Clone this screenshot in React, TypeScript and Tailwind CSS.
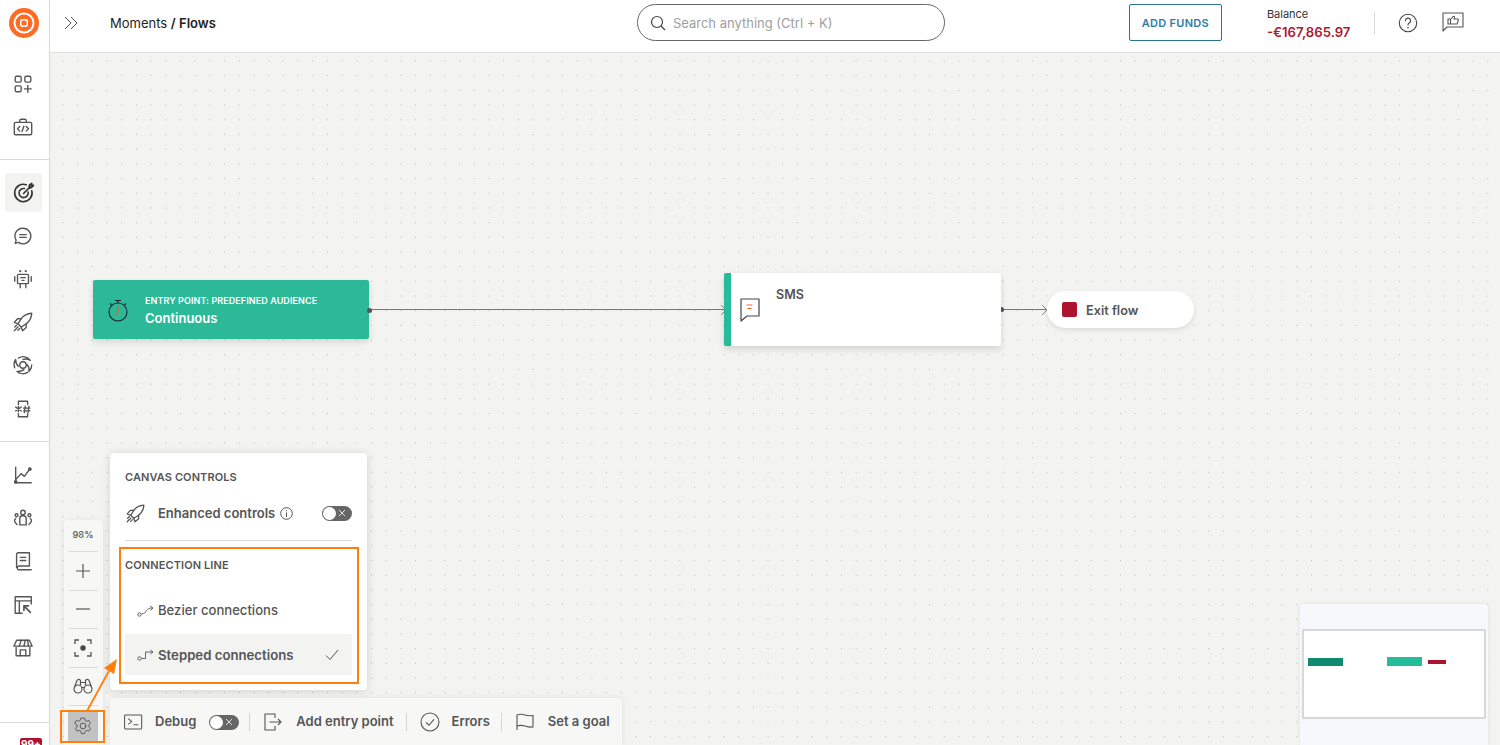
import { ReactNode } from "react";

const Ico = ({ children, size = 22, sw = 1.5, color = "#555" }: { children: ReactNode; size?: number; sw?: number; color?: string }) => (
  <svg width={size} height={size} viewBox="0 0 24 24" fill="none" stroke={color} strokeWidth={sw} strokeLinecap="round" strokeLinejoin="round">
    {children}
  </svg>
);

const Rocket = ({ size = 22 }: { size?: number }) => (
  <Ico size={size}>
    <path d="M21.5 2.500c-5.500.3-9 2.500-11.500 6l-3.500 5.500 3.500 3.500 5.500-3.500c3.500-2.500 5.700-6 6-11.500Z" />
    <path d="M10 8.500H6L2.500 12.500l4 1.500" />
    <path d="M15.500 14v4L11.500 21.500 10 17.500" />
    <path d="M6.500 17.500 2.500 21.500" />
    <path d="M5 15.500 3 17.500" />
    <path d="M8.500 19 6.500 21" />
  </Ico>
);

const sideTop = [
  <Ico key="a">
    <rect x="3.500" y="3.500" width="6.500" height="6.500" rx="1.500" />
    <rect x="14" y="3.500" width="6.500" height="6.500" rx="1.500" />
    <rect x="3.500" y="14" width="6.500" height="6.500" rx="1.500" />
    <path d="M17.250 13.500v7.500M13.500 17.250H21" />
  </Ico>,
  <Ico key="b">
    <rect x="2.500" y="7" width="19" height="13.500" rx="1.500" />
    <path d="M8.500 7V5a1.500 1.500 0 0 1 1.500-1.500h4A1.500 1.500 0 0 1 15.500 5v2" />
    <path d="m8.500 11.500-2.500 2.500 2.500 2.500M15.500 11.500l2.500 2.500-2.500 2.500M13 11l-2 6" />
  </Ico>,
];

const sideMid = [
  <Ico key="c" color="#333" sw={1.7}>
    <path d="M20.500 9.500A9.500 9.500 0 1 1 14.500 3" />
    <path d="M16.500 11a5 5 0 1 1-4-3.900" />
    <path d="M11.500 12.500 20 4" />
    <path d="M17.500 6.500 17.800 3.500 20.500 1.500 20.500 3.500 22.500 3.500 20 6.300Z" />
  </Ico>,
  <Ico key="d">
    <path d="M12 3.500a8.500 8.500 0 1 1-4.800 15.500l-3.700 1 1-3.500A8.500 8.500 0 0 1 12 3.500Z" />
    <path d="M8.500 10.500h7M8.500 13.500h7" />
  </Ico>,
  <Ico key="e">
    <rect x="6" y="7" width="12" height="10" rx="1" />
    <path d="M3 9.500v5M21 9.500v5M9 17v4.500M15 17v4.500M9.500 10.500h5M11 13.500h2" />
    <path d="M9 3.500h.01M15 3.500h.01" strokeWidth="2.400" />
  </Ico>,
  <Rocket key="f" />,
  <Ico key="g">
    <circle cx="12" cy="12" r="3.500" />
    <path d="M7 4.500A9.500 9.500 0 0 1 20 7c-2.500-1.500-6-1.800-8-1M21.500 12a9.500 9.500 0 0 1-3 7c.5-3-.3-5.500-2-7.500M17 20a9.500 9.500 0 0 1-11.500-1c3 .3 5.500-.5 7.500-2M3 15a9.500 9.500 0 0 1 1-9c0 3 .8 5.500 3 7.500" />
  </Ico>,
  <Ico key="h">
    <path d="M7 7V3.500h10V7M7 17v3.500h10V17" />
    <path d="M7 9v6M4 10l6 4M10 10l-6 4" />
    <path d="M14.500 9l-1 7M18.500 9l-1 7M12.500 11h7M12.500 14h7" />
  </Ico>,
];

const sideBottom = [
  <Ico key="i">
    <path d="M4 3.500V20.500H21" />
    <path d="M4 17l6-6.500 3.500 3L19 6" />
    <circle cx="19.500" cy="5.500" r="1.300" fill="#555" />
    <circle cx="4" cy="19.500" r="1.300" fill="#555" />
  </Ico>,
  <Ico key="j">
    <circle cx="12" cy="6" r="2.500" />
    <path d="M8.500 19.500v-7a3 3 0 0 1 3-3h1a3 3 0 0 1 3 3v7Z" />
    <circle cx="5" cy="9" r="1.600" />
    <circle cx="19" cy="9" r="1.600" />
    <path d="M5.500 19 3.500 17c-1-1.500-1-3.500.5-4.500M18.500 19l2-2c1-1.500 1-3.500-.5-4.500" />
  </Ico>,
  <Ico key="k">
    <path d="M5 19V5a2 2 0 0 1 2-2h12v14.500H7A2.200 2.200 0 0 0 7 21.500h14" />
    <path d="M9 8h6M9 11.500h6" />
  </Ico>,
  <Ico key="l">
    <path d="M11 21H3.500V3H21v8" />
    <path d="M3.500 7.500H21M8 7.500V21" />
    <path d="m13 13 7 7M13 13v5M13 13h5" strokeWidth="1.800" />
  </Ico>,
  <Ico key="m">
    <path d="M4.500 11.500V20.500h15V11.500" />
    <path d="M5 3.500h14L22 10H2Z" />
    <path d="M8 10l2-6.500M13 10l1.500-6.500M18 10l-1-6.500" />
    <path d="M9 20.500V14h6v6.500" />
  </Ico>,
];

const ZoomCell = ({ children, h = "h-[38.5px]" }: { children: ReactNode; h?: string }) => (
  <div className={`${h} mx-[5px] flex items-center justify-center border-b border-[#dcdcdc] pr-px`}>{children}</div>
);

const Sep = () => <div className="h-[18px] w-px bg-[#d5d5d5]" />;

const Toggle = () => (
  <div className="flex h-[15px] w-[30px] items-center justify-between rounded-full bg-[#666] pl-px pr-[6px]">
    <div className="h-[13px] w-[13px] rounded-full bg-white" />
    <svg width="8" height="8" viewBox="0 0 8 8" stroke="#eee" strokeWidth="0.9"><path d="M1 1l6 6M7 1L1 7" /></svg>
  </div>
);

export default function App() {
  return (
    <div className="flex h-[745px] w-[1500px] overflow-hidden bg-white font-['Inter',sans-serif] text-[#444]">
      {/* left nav */}
      <div className="flex h-full w-[50px] shrink-0 flex-col border-r border-[#d9d9d9] bg-white">
        <div className="h-[160px] shrink-0 border-b border-[#d9d9d9]">
          <div className="flex h-[62.5px] items-start pl-[9px] pt-[8px]">
            <svg width="30" height="30" viewBox="0 0 30 30">
              <circle cx="15" cy="15" r="15" fill="#ff6b22" />
              <circle cx="15" cy="15" r="10.5" fill="#fff" />
              <circle cx="15" cy="15" r="8.5" fill="#ff6b22" />
              <rect x="11" y="11" width="8" height="8" rx="2.5" fill="#fff" />
              <rect x="12.5" y="12.5" width="5" height="5" rx="1.5" fill="#ff6b22" />
            </svg>
          </div>
          {sideTop.map((icon, i) => (
            <div key={i} className="flex h-[43px] items-center justify-center pr-[3px]">{icon}</div>
          ))}
        </div>
        <div className="h-[282px] shrink-0 border-b border-[#d9d9d9] pt-[11px]">
          {sideMid.map((icon, i) => (
            <div key={i} className="flex h-[43.2px] items-center justify-center pr-[3px]">
              <div className={i === 0 ? "ml-px flex h-[39px] w-[37px] items-center justify-center rounded-[3px] bg-[#f3f3f2]" : ""}>{icon}</div>
            </div>
          ))}
        </div>
        <div className="h-[281px] shrink-0 border-b border-[#d9d9d9] pt-[11px]">
          {sideBottom.map((icon, i) => (
            <div key={i} className="flex h-[43.3px] items-center justify-center pr-[3px]">{icon}</div>
          ))}
        </div>
        <div className="flex justify-end pr-[7px] pt-[15px]">
          <span className="h-[14px] w-[22px] rounded-[2px] bg-[#b3102e] text-center text-[10px] font-bold leading-[12px] text-white">99+</span>
        </div>
      </div>

      <div className="flex min-w-0 flex-1 flex-col">
        {/* top bar */}
        <div className="flex h-[53px] shrink-0 items-center border-b border-[#dedede] bg-white pb-[7px]">
          <div className="ml-[13px] w-[47px]">
            <svg width="16" height="16" viewBox="0 0 16 16" fill="none" stroke="#555" strokeWidth="1"><path d="M2 2l6 6-6 6M8 2l6 6-6 6" /></svg>
          </div>
          <div className="mt-[2px] text-[13px] text-[#222]">Moments <span className="font-semibold">/ Flows</span></div>
          <div className="ml-[421px] flex h-[37px] w-[308px] items-center rounded-full border border-[#666] pl-[12px]">
            <svg width="16" height="16" viewBox="0 0 16 16" fill="none" stroke="#444" strokeWidth="1.2"><circle cx="7" cy="7" r="5.5" /><path d="M11 11l4 4" /></svg>
            <span className="ml-[7px] mt-[2px] text-[13px] text-[#a0a0a0]">Search anything (Ctrl + K)</span>
          </div>
          <div className="ml-[184px] flex h-[37px] w-[93px] items-center justify-center rounded-[2px] border border-[#2a7396] pt-[2px] text-[11px] font-semibold tracking-[0.3px] text-[#2f7ea6]">ADD FUNDS</div>
          <div className="ml-[45px] mt-[2px] w-[107px]">
            <div className="text-[11px] leading-[14px] text-[#333]">Balance</div>
            <div className="mt-[3px] text-[13.2px] font-semibold leading-[17px] text-[#ae1a30]">-€167,865.97</div>
          </div>
          <div className="h-[22px] w-px bg-[#d9d9d9]" />
          <div className="ml-[22px]">
            <Ico size={22} color="#444" sw={1.2}>
              <circle cx="12" cy="12" r="9.5" />
              <path d="M9.200 9.500a2.800 2.800 0 1 1 4.200 2.400c-.9.600-1.400 1.100-1.400 2.100" />
              <path d="M12 17.200h.01" strokeWidth="1.8" />
            </Ico>
          </div>
          <div className="ml-[23px] -mt-[1px]">
            <svg width="22" height="20" viewBox="0 0 22 20" fill="none" stroke="#555" strokeWidth="1.1" strokeLinejoin="round">
              <path d="M1 1h20v14H5l-4 4Z" />
              <path d="M6 7h2.500v5H6ZM8.500 7.500l2.500-3c1-.6 1.800.2 1.500 1.200L12 7h3.500c.7 0 1 .6.800 1.200l-1 3.300c-.1.300-.4.500-.8.500H8.500" />
            </svg>
          </div>
        </div>

        {/* canvas */}
        <div className="relative flex-1 bg-[#f3f3f1] bg-[radial-gradient(circle,#b4b4b4_0.6px,transparent_0.9px)] bg-[size:14.7px_14.7px] bg-[position:5.7px_0.7px]">
          {/* entry node */}
          <div className="absolute left-[43px] top-[227px] flex h-[59px] w-[276px] items-center rounded-[2px] bg-[#2bb998] pl-[14px] shadow-[0_3px_6px_rgba(0,0,0,0.12)]">
            <svg width="22" height="24" viewBox="0 0 22 24" fill="none" stroke="#223" strokeWidth="1.1">
              <circle cx="11" cy="14" r="9" />
              <path d="M8 2.500h6M11 2.500V5M3 5.500 4.500 7M19 5.500 17.500 7" />
              <path d="M11 8v6l-3 3.500" stroke="#e0662a" strokeWidth="1.2" />
            </svg>
            <div className="ml-[16px] mt-[3px] text-white">
              <div className="text-[9px] font-semibold leading-[12px] tracking-[0.08px]">ENTRY POINT: PREDEFINED AUDIENCE</div>
              <div className="mt-[2px] text-[13px] font-semibold leading-[18px]">Continuous</div>
            </div>
          </div>

          {/* connectors */}
          <div className="absolute left-[319px] top-[256px] h-px w-[355px] bg-[#777]" />
          <div className="absolute left-[317px] top-[254.5px] h-[5px] w-[5px] rounded-full bg-[#555]" />
          <svg className="absolute left-[670px] top-[251px]" width="7" height="12" viewBox="0 0 7 12" fill="none" stroke="#888"><path d="M1 1l5 5-5 5" /></svg>
          <div className="absolute left-[951px] top-[256px] h-px w-[46px] bg-[#777]" />
          <div className="absolute left-[948.5px] top-[254px] h-[5px] w-[5px] rounded-full bg-[#555]" />
          <svg className="absolute left-[991px] top-[251px]" width="7" height="12" viewBox="0 0 7 12" fill="none" stroke="#888"><path d="M1 1l5 5-5 5" /></svg>

          {/* sms node */}
          <div className="absolute left-[674px] top-[220px] flex h-[73px] w-[277px] rounded-[2px] border-l-[7px] border-[#26bc9a] bg-white shadow-[0_3px_6px_rgba(0,0,0,0.14)]">
            <svg className="ml-[9px] mt-[25px]" width="20" height="24" viewBox="0 0 20 24" fill="none">
              <path d="M1 1h18v17H7l-6 5Z" stroke="#444" strokeWidth="1.2" strokeLinejoin="round" />
              <path d="M6.500 7h6M7.500 10.500h4" stroke="#f0642a" strokeWidth="1" />
            </svg>
            <div className="ml-[16px] mt-[13px] text-[12.5px] font-semibold text-[#555]">SMS</div>
          </div>

          {/* exit */}
          <div className="absolute left-[997px] top-[238px] flex h-[37px] w-[147px] items-center rounded-full bg-white pl-[15px] shadow-[0_2px_5px_rgba(0,0,0,0.1)]">
            <div className="h-[15px] w-[15px] rounded-[2px] bg-[#ae132d]" />
            <span className="ml-[9px] mt-[2px] text-[12.7px] font-semibold text-[#555]">Exit flow</span>
          </div>

          {/* settings popup */}
          <div className="absolute left-[60px] top-[400px] h-[237px] w-[257px] rounded-[4px] bg-white px-[15px] pt-[17px] shadow-[0_1px_8px_rgba(0,0,0,0.14)]">
            <div className="text-[11px] font-semibold leading-[14px] tracking-[0.1px] text-[#555]">CANVAS CONTROLS</div>
            <div className="mt-[18px] flex h-[22px] items-center">
              <Rocket size={21} />
              <span className="ml-[12px] mt-[2px] text-[13px] font-semibold text-[#555]">Enhanced controls</span>
              <svg className="ml-[5px]" width="13" height="13" viewBox="0 0 13 13" fill="none" stroke="#555"><circle cx="6.5" cy="6.5" r="5.8" /><path d="M6.500 5.500V10M6.500 3.200v1" /></svg>
              <div className="ml-auto"><Toggle /></div>
            </div>
            <div className="mt-[16px] h-px bg-[#d9d9d9]" />
          </div>

          {/* connection line box */}
          <div className="absolute left-[69px] top-[494px] h-[137px] w-[240px] border-2 border-[#ff7f0e] pl-[4px] pr-[5px] pt-[9px]">
            <div className="text-[11px] font-semibold leading-[14px] tracking-[0.1px] text-[#555]">CONNECTION LINE</div>
            <div className="mt-[18px] flex h-[41px] items-center pl-[12px]">
              <svg width="17" height="12" viewBox="0 0 17 12" fill="none" stroke="#555" strokeWidth="0.9"><circle cx="2.5" cy="9.5" r="1.7" /><path d="M4.500 9c3-.3 4-1.500 5-3.500 1-1.500 3-2.500 6-2.500M13 1l3 2-2.500 2.500" /></svg>
              <span className="ml-[4px] text-[13.1px] font-medium text-[#555]">Bezier connections</span>
            </div>
            <div className="mt-[3px] flex h-[41px] items-center rounded-[2px] bg-[#f3f3f2] pl-[12px] pr-[13px]">
              <svg width="17" height="12" viewBox="0 0 17 12" fill="none" stroke="#555" strokeWidth="0.9"><circle cx="2.5" cy="9.5" r="1.7" /><path d="M4.500 9.500H8.500V3H15.500M13.500 1l2.500 2-2.500 2" /></svg>
              <span className="ml-[4px] mt-[2px] text-[13.2px] font-semibold text-[#555]">Stepped connections</span>
              <svg className="ml-auto" width="14" height="12" viewBox="0 0 14 12" fill="none" stroke="#555"><path d="M1 6.500l4 4L13 1" /></svg>
            </div>
          </div>

          {/* zoom controls */}
          <div className="absolute left-[14px] top-[467px] h-[225px] w-[39px] rounded-t-[4px] bg-[#f7f7f6] shadow-[0_1px_6px_rgba(0,0,0,0.08)]">
            <ZoomCell h="h-[32px]"><span className="mb-[2px] text-[9.3px] font-medium text-[#555]">98%</span></ZoomCell>
            <ZoomCell><svg width="14" height="14" viewBox="0 0 14 14" stroke="#555" strokeWidth="1.2"><path d="M7 0v14M0 7h14" /></svg></ZoomCell>
            <ZoomCell><svg width="14" height="2" viewBox="0 0 14 2" stroke="#555" strokeWidth="1.2"><path d="M0 1h14" /></svg></ZoomCell>
            <ZoomCell>
              <svg width="18" height="18" viewBox="0 0 18 18" fill="none" stroke="#555" strokeWidth="1.3"><path d="M1 5V1h4M13 1h4v4M17 13v4h-4M5 17H1v-4" /><circle cx="9" cy="9" r="2.7" fill="#444" stroke="none" /></svg>
            </ZoomCell>
            <ZoomCell>
              <svg width="20" height="16" viewBox="0 0 20 16" fill="none" stroke="#555" strokeWidth="1.2"><circle cx="5" cy="11" r="4" /><circle cx="15" cy="11" r="4" /><path d="M1.500 9 4 2.500c.5-1.500 3-1.500 3.500 0V7M18.500 9 16 2.500c-.5-1.500-3-1.500-3.500 0V7M8.500 9.500h3M7.500 4.500h5" /></svg>
            </ZoomCell>
            <div className="mx-[4px] mt-[4.5px] flex h-[31px] w-[30px] items-center justify-center bg-[#c2c2c2]">
              <Ico size={20} sw={1.1} color="#555">
                <path d="M10 2.500h4l.6 2.800 1.800 1 2.700-.9 2 3.500-2.100 1.900v2l2.100 1.900-2 3.500-2.700-.9-1.800 1-.6 2.800h-4l-.6-2.800-1.800-1-2.700.9-2-3.500 2.100-1.900v-2L1.900 8.900l2-3.500 2.700.9 1.800-1Z" />
                <circle cx="12" cy="12" r="3.5" />
              </Ico>
            </div>
          </div>
          <div className="absolute left-[10px] top-[656.5px] h-[33px] w-[45px] border-2 border-[#ff7f0e]" />

          {/* arrow */}
          <svg className="absolute left-[34px] top-[603px]" width="36" height="58" viewBox="0 0 36 58" fill="none">
            <path d="M3 55 26 13" stroke="#ff7f0e" strokeWidth="1.8" />
            <path d="M33 3 20 12l10 6Z" fill="#ff7f0e" />
          </svg>

          {/* bottom toolbar */}
          <div className="absolute left-[60px] top-[645px] flex h-[47px] w-[512px] items-center rounded-t-[4px] bg-[#f7f7f6] pl-[14px] pt-[1px] text-[13px] font-semibold text-[#555] shadow-[0_0_6px_rgba(0,0,0,0.08)]">
            <svg width="19" height="16" viewBox="0 0 20 16" fill="none" stroke="#555" strokeWidth="1.1"><rect x="0.6" y="0.6" width="18" height="14.8" rx="1" /><path d="M4.500 4.500 8 7.500l-3.500 3M10 11h5" /></svg>
            <span className="ml-[12px]">Debug</span>
            <div className="ml-[13px] mr-[10px]"><Toggle /></div>
            <Sep />
            <svg className="ml-[14px]" width="18" height="18" viewBox="0 0 18 18" fill="none" stroke="#555" strokeWidth="1.1"><path d="M11 5V1H1v16h10v-4M5.500 9H17M14 6l3 3-3 3" /></svg>
            <span className="ml-[14px]">Add entry point</span>
            <div className="ml-[12px]"><Sep /></div>
            <svg className="ml-[13px]" width="20" height="20" viewBox="0 0 20 20" fill="none" stroke="#555" strokeWidth="1.1"><circle cx="10" cy="10" r="9" /><path d="M6 10.500l3 2.800 5-6" /></svg>
            <span className="ml-[12px]">Errors</span>
            <div className="ml-[11px]"><Sep /></div>
            <svg className="ml-[14px]" width="18" height="18" viewBox="0 0 18 18" fill="none" stroke="#555" strokeWidth="1.1"><path d="M1 17V2c3-1.500 5-1 8 0s5 1 8 .5V14c-3 .5-5 0-8-1s-5-1-8 0" /></svg>
            <span className="ml-[14px]">Set a goal</span>
          </div>

          {/* minimap */}
          <div className="absolute left-[1250px] top-[551px] h-[141px] w-[188px] rounded-t-[3px] bg-[#f7f8fb] shadow-[0_0_4px_rgba(0,0,0,0.08)]">
            <div className="ml-[2px] mt-[25px] h-[90px] w-[184px] border-2 border-[#d8d8d8] bg-white pl-[4px] pt-[26px]">
              <div className="flex h-[9px] items-center">
                <div className="h-[8px] w-[35px] bg-[#128a72]" />
                <div className="ml-[44px] h-[9px] w-[35px] bg-[#26bc9a]" />
                <div className="ml-[6px] h-[4px] w-[18px] bg-[#ae132d]" />
              </div>
            </div>
          </div>
        </div>
      </div>
    </div>
  );
}
